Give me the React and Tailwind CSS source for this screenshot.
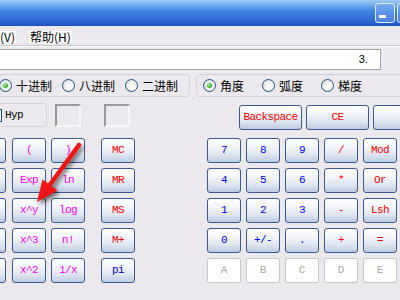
import React from "react";

const RED = "text-[#ff0000]";
const MAG = "text-[#ff00ff]";
const BLUE = "text-[#0000ff]";

function Btn({ label, color, wide }) {
  return (
    <div
      className={`${wide ? "w-[63px]" : "w-[34px]"} h-[25px] shrink-0 flex items-center justify-center rounded-[3px] border border-[#3b5b8e] bg-[linear-gradient(180deg,#ffffff_0%,#f3f5fa_35%,#dde4ef_70%,#bccbe2_100%)] text-[11px] tracking-[-0.6px] leading-none font-['Liberation_Mono',monospace] ${color}`}
    >
      {label}
    </div>
  );
}

function DisBtn({ label }) {
  return (
    <div className="w-[34px] h-[25px] shrink-0 flex items-center justify-center rounded-[2px] border border-[#cac8c2] bg-white text-[11px] leading-none font-['Liberation_Mono',monospace] text-[#a6a6a6]">
      {label}
    </div>
  );
}

function Radio({ checked, label }) {
  return (
    <div className="flex items-center gap-[4px] shrink-0">
      <div className="w-[13px] h-[13px] rounded-full border border-[#1e5186] bg-[radial-gradient(circle_at_65%_65%,#ffffff_0%,#f3f3f0_40%,#d6d6cf_100%)] flex items-center justify-center">
        {checked && (
          <div className="w-[5px] h-[5px] rounded-full bg-[radial-gradient(circle_at_35%_35%,#9df08f_0%,#36b32e_60%,#1d8a19_100%)]" />
        )}
      </div>
      <span className="text-[12px] leading-[14px] text-black font-['Noto_Sans_CJK_SC',sans-serif]">
        {label}
      </span>
    </div>
  );
}

function Col({ items }) {
  return (
    <div className="flex flex-col gap-[5px]">
      {items.map(([l, c], i) => (
        <Btn key={i} label={l} color={c} />
      ))}
    </div>
  );
}

export default function App() {
  const col0 = [["", MAG], ["", MAG], ["", MAG], ["", MAG], ["", MAG]];
  const col1 = [["(", MAG], ["Exp", MAG], ["x^y", MAG], ["x^3", MAG], ["x^2", MAG]];
  const col2 = [[")", MAG], ["ln", MAG], ["log", MAG], ["n!", MAG], ["1/x", MAG]];
  const mem = [["MC", RED], ["MR", RED], ["MS", RED], ["M+", RED], ["pi", BLUE]];
  const grid = [
    ["7", BLUE], ["8", BLUE], ["9", BLUE], ["/", RED], ["Mod", RED],
    ["4", BLUE], ["5", BLUE], ["6", BLUE], ["*", RED], ["Or", RED],
    ["1", BLUE], ["2", BLUE], ["3", BLUE], ["-", RED], ["Lsh", RED],
    ["0", BLUE], ["+/-", BLUE], [".", BLUE], ["+", RED], ["=", RED],
  ];

  return (
    <div className="relative w-[400px] h-[300px] overflow-hidden bg-[#ebe9ed] font-['Liberation_Sans',sans-serif]">
      {/* Title bar */}
      <div className="h-[26px] flex items-start gap-[2px] pl-[375px] pt-[3px] bg-[linear-gradient(180deg,#9ccaf6_0%,#7db4f0_15%,#5597e8_32%,#3e84e2_42%,#3475dc_65%,#2a63d0_88%,#1e4db8_100%)]">
        <div className="w-[20px] h-[20px] shrink-0 rounded-[3px] border border-[#dfe9fb] bg-[linear-gradient(180deg,#7eaef2_0%,#5a92e9_50%,#4a82e2_100%)] flex items-end pl-[3px] pb-[4px]">
          <div className="w-[7px] h-[3px] bg-white" />
        </div>
        <div className="w-[20px] h-[20px] shrink-0 rounded-[3px] border border-[#dfe9fb] bg-[linear-gradient(180deg,#7eaef2_0%,#5a92e9_50%,#4a82e2_100%)]" />
      </div>

      {/* Menu bar */}
      <div className="h-[19px] flex items-start pt-[5px] text-[12px] leading-[12px] text-black font-['Noto_Sans_CJK_SC',sans-serif]">
        <span className="bg-white pr-[1px]">(V)</span>
        <span className="bg-white ml-[13px] pl-[1px] pr-[1px]">帮助(H)</span>
      </div>
      <div className="h-[1px] bg-[#c9c8cc]" />
      <div className="h-[1px] bg-white" />

      {/* Display */}
      <div className="mt-[2px] -ml-[4px] w-[385px] h-[21px] border border-[#a3a3a3] bg-white flex items-start justify-end pr-[12px] pt-[3px]">
        <span className="text-[11px] leading-[12px] text-black font-['Liberation_Sans',sans-serif]">3.</span>
      </div>

      {/* Radio groups */}
      <div className="mt-[4px] flex">
        <div className="-ml-[20px] w-[210px] h-[23px] shrink-0 rounded-[4px] border border-[#d3d2d8] flex items-center pl-[18px] gap-[10px]">
          <Radio checked label="十进制" />
          <Radio label="八进制" />
          <Radio label="二进制" />
        </div>
        <div className="ml-[6px] w-[230px] h-[23px] shrink-0 rounded-[4px] border border-[#d3d2d8] flex items-center pl-[6px] gap-[18px]">
          <Radio checked label="角度" />
          <Radio label="弧度" />
          <Radio label="梯度" />
        </div>
      </div>

      {/* Hyp row */}
      <div className="mt-[6px] flex items-start">
        <div className="-ml-[20px] w-[67px] h-[24px] shrink-0 rounded-[4px] border border-[#d3d2d8] flex items-center pl-[8px]">
          <div className="w-[13px] h-[13px] shrink-0 border border-[#1e5186] bg-white" />
          <span className="ml-[3px] text-[11px] tracking-[-0.6px] leading-none text-black font-['Liberation_Mono',monospace]">Hyp</span>
        </div>
        <div className="ml-[8px] mt-[1px] w-[26px] h-[23px] shrink-0 border-2 border-t-[#9a9a9a] border-l-[#9a9a9a] border-b-[#f6f6f6] border-r-[#f6f6f6]" />
        <div className="ml-[23px] mt-[1px] w-[26px] h-[23px] shrink-0 border-2 border-t-[#9a9a9a] border-l-[#9a9a9a] border-b-[#f6f6f6] border-r-[#f6f6f6]" />
        <div className="ml-[109px] mt-[2px] flex gap-[4px]">
          <Btn wide label="Backspace" color={RED} />
          <Btn wide label="CE" color={RED} />
          <Btn wide label="" color={RED} />
        </div>
      </div>

      {/* Buttons */}
      <div className="mt-[8px] flex items-start">
        <div className="-ml-[28px]">
          <Col items={col0} />
        </div>
        <div className="ml-[6px]">
          <Col items={col1} />
        </div>
        <div className="ml-[5px]">
          <Col items={col2} />
        </div>
        <div className="ml-[16px]">
          <Col items={mem} />
        </div>
        <div className="ml-[72px] grid grid-cols-[repeat(5,34px)] gap-[5px]">
          {grid.map(([l, c], i) => (
            <Btn key={i} label={l} color={c} />
          ))}
          {["A", "B", "C", "D", "E"].map((l) => (
            <DisBtn key={l} label={l} />
          ))}
        </div>
      </div>

      {/* Red arrow overlay */}
      <svg
        className="absolute left-0 top-0 pointer-events-none [filter:drop-shadow(2px_3px_2px_rgba(0,0,0,0.55))]"
        width="400"
        height="300"
        viewBox="0 0 400 300"
      >
        <line x1="79" y1="145" x2="49" y2="186" stroke="#f01414" strokeWidth="4.5" strokeLinecap="round" />
        <polygon points="37,202 42.5,179.5 57.5,190.5" fill="#f01414" />
      </svg>
    </div>
  );
}
